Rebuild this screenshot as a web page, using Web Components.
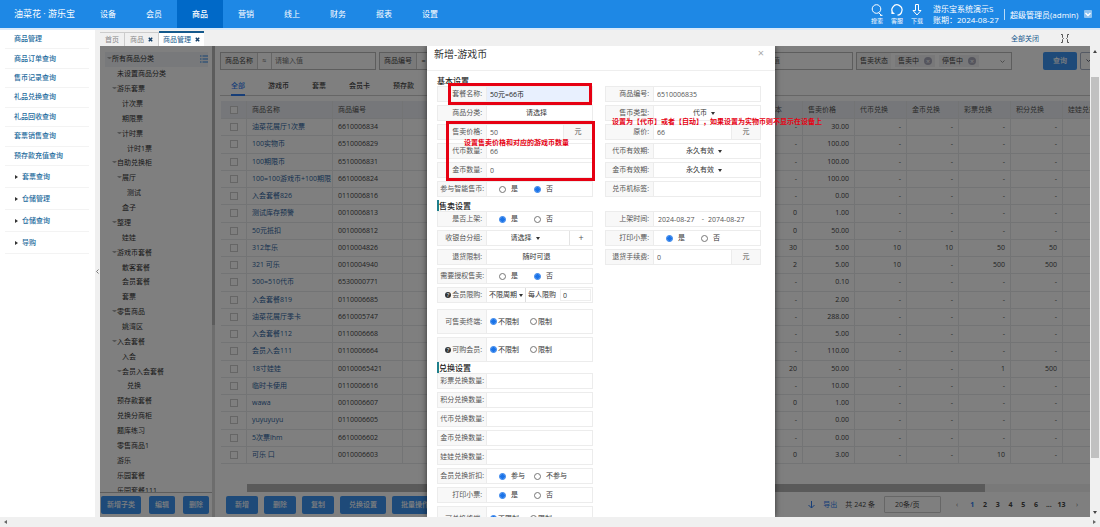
<!DOCTYPE html>
<html lang="zh-CN">
<head>
<meta charset="utf-8">
<title>商品管理</title>
<style>
html,body{margin:0;height:100%}
body{font:7px/10px "Open Sans","Noto Sans CJK SC",sans-serif;color:#444;background:#fff;overflow:hidden}
</style>
</head>
<body>
<app-shell></app-shell>
<script>
const base = `*{box-sizing:border-box}button,input,select{font:inherit;color:inherit;margin:0;padding:0;border:0;background:none;border-radius:0;outline:0;min-width:0}
button{cursor:pointer;white-space:nowrap}a{color:inherit;text-decoration:none}ul{list-style:none;margin:0;padding:0}select{appearance:none}`;
function define(tag, css, html) {
  customElements.define(tag, class extends HTMLElement {
    constructor() {
      super();
      this.attachShadow({mode: 'open'});
    }
    connectedCallback() {
      const body = typeof html === 'function' ? html(this) : html;
      this.shadowRoot.innerHTML = `<style>${base}${css}</style>${body}`;
    }
  });
}

/* Top bar */
define('top-bar', `
:host{display:flex;height:30px;background:#1e88e5;color:#fff;border-bottom:2px solid #d9eafa;font-size:8px;align-items:stretch}
.brand{width:85px;padding-left:14px;font-size:9px;line-height:28px;white-space:nowrap}
nav{display:flex;flex:1}
nav a{width:46px;text-align:center;line-height:28px}
nav a.on{background:#0069c8;font-weight:500}
.tools{display:flex;align-items:center}
.tool{width:20px;display:flex;flex-direction:column;align-items:center;font-size:6px;line-height:8px;gap:1px;white-space:nowrap}
.tool svg{width:12px;height:12px}
.info{margin-left:1px;line-height:11px;width:71px;white-space:nowrap}
.user{border-left:1px solid #b9dbf7;padding-left:5px;line-height:11px;width:80px;white-space:nowrap}
.more{width:8px;height:8px;background:#8fc3f1;border-radius:1px;display:flex;margin-right:8px}
.more svg{width:8px;height:8px}
.tools .info{margin-left:6px}
`, `<div class="brand">油菜花 · 游乐宝</div>
<nav>${['设备','会员','商品','营销','线上','财务','报表','设置'].map(t => `<a href="#" class="${t === '商品' ? 'on' : ''}">${t}</a>`).join('')}</nav>
<div class="tools">
<a href="#" class="tool"><svg viewBox="0 0 12 12" fill="none" stroke="#fff"><circle cx="5.5" cy="5" r="4.3"/><path d="M7.5 8.5l3 3M9 11.3h2.5"/></svg>搜索</a>
<a href="#" class="tool"><svg viewBox="0 0 12 12" fill="none" stroke="#fff" stroke-width="1.2"><path d="M2.500 9.500A5 5 0 1 1 10.500 8M1 6v3.500h2.500M10.800 7.500c-.5 2-2 3.500-4.300 3.700"/></svg>客服</a>
<a href="#" class="tool"><svg viewBox="0 0 12 12" fill="none" stroke="#fff"><path d="M4.500 .5h3v6h2.500L6 11 2 6.500h2.500z"/></svg>下载</a>
<div class="info">游乐宝系统演示S<br>账期：2024-08-27</div>
<div class="user">超级管理员(admin)</div>
<button class="more" aria-label="更多"><svg viewBox="0 0 8 8" fill="none" stroke="#fff" stroke-width="1.400"><path d="M1.500 3L4 5.500 6.500 3"/></svg></button>
</div>`);

/* Left menu */
define('side-nav', `
:host{display:block;padding:0 6px 0 5px;background:#fff;color:#1b6a9c;font-weight:500}
.flat{display:grid;grid-auto-rows:1fr;height:136px}
li{display:flex;align-items:center;padding-left:9px;border-bottom:1px solid #f3f3f3;white-space:nowrap}
.deep li{height:22px;gap:4px;padding-left:10px}
.deep li::before{content:"";border:2px solid transparent;border-left:3px solid #333;border-right:0}
`, `<ul class="flat">${['商品管理','商品订单查询','售币记录查询','礼品兑换查询','礼品回收查询','套票销售查询','预存款充值查询'].map(t => `<li><a href="#">${t}</a></li>`).join('')}</ul>
<ul class="deep">${['套票查询','仓储管理','仓储查询','导购'].map(t => `<li><a href="#">${t}</a></li>`).join('')}</ul>`);

/* Page tabs */
define('page-tabs', `
:host{display:flex;height:16px;background:#f0f0f0;padding-left:5px;align-items:flex-end;color:#888}
.tab{height:14px;display:flex;align-items:center;justify-content:center;gap:4px;border:1px solid #ccc;border-bottom:0;border-left:0;padding:0 5px}
.tab:first-child{border-left:1px solid #ccc}
.tab.on{height:15px;background:#fff;color:#14598c;border:0;border-top:2px solid #14598c;padding:0 4px}
.tab button{width:5px;height:8px;display:flex;align-items:center}
.tab svg{width:5px;height:5px}
.all{margin-left:auto;color:#14598c;line-height:15px}
.fold{width:8px;height:9px;margin:0 31px 3px 22px;display:flex}
`, () => { const x = `<button aria-label="关闭"><svg viewBox="0 0 5 5" stroke="#14406a" stroke-width="1.500"><path d="M.8.8l3.400 3.400M4.200.8L.8 4.200"/></svg></button>`;
return `<div class="tab"><a href="#">首页</a></div><div class="tab"><a href="#">商品</a>${x}</div><div class="tab on"><a href="#">商品管理</a>${x}</div>
<a href="#" class="all">全部关闭</a><button class="fold" aria-label="收起"><svg viewBox="0 0 8 9" width="8" height="9" fill="none" stroke="#555"><path d="M0 .5h1.500v3l1 1-1 1v3H0M8 .5H6.500v3l-1 1 1 1v3h1.500"/></svg></button>`; });

/* Category tree */
const tree = [[0,'所有商品分类',1],[1,'未设置商品分类'],[1,'游乐套票',1],[2,'计次票'],[2,'期限票'],[2,'计时票',1],[3,'计时1票'],[1,'自助兑换柜',1],[2,'展厅',1],[3,'测试'],[2,'盒子'],[1,'整理',1],[2,'娃娃'],[1,'游戏币套餐',1],[2,'散客套餐'],[2,'会员套餐'],[2,'套票'],[1,'零售商品',1],[2,'姚湾区'],[1,'入会套餐',1],[2,'入会'],[2,'会员入会套餐',1],[3,'兑换'],[1,'预存款套餐'],[1,'兑换分商柜'],[1,'题库练习'],[1,'零售商品1'],[1,'游乐'],[1,'乐园套餐'],[1,'乐园套餐111']];
define('category-tree', `
:host{display:flex;flex-direction:column;width:115px;background:#fff;border-right:3px solid #dadada;min-height:0;position:relative;color:#333}
.view{flex:1;overflow:hidden;min-height:0;padding:6px 4px 0 5px}
ul{height:446px;display:grid;grid-auto-rows:1fr}
li{display:flex;align-items:center;white-space:nowrap}
li.l0{background:#f0f3f6;padding-left:2px}.l1{padding-left:7px}.l2{padding-left:12px}.l3{padding-left:17px}
i{width:5px;height:4px;display:flex}
i.c::before{content:"";width:3px;border:2px solid transparent;border-top-color:#aaa;height:0}
li svg{margin-left:auto;width:8px;height:8px}
.bar{height:25px;border-top:1px solid #bbb;display:flex;align-items:center;gap:8px;padding-left:1px}
.bar button{height:18px;background:#3c94f2;color:#fff;border-radius:2px;padding:0 6px;font-weight:500}
.thumb{position:absolute;right:-3px;top:0;width:3px;height:279px;background:#b8b8b8}
`, `<div class="view"><ul>${tree.map(([l,t,c]) => `<li class="l${l}"><i class="${c ? 'c' : ''}"></i>${t}${l ? '' : '<svg viewBox="0 0 8 8" stroke="#2f86e8"><path d="M0 1h1.500M2.500 1H8M0 4h1.500M2.500 4H8M0 7h1.500M2.500 7H8"/></svg>'}</li>`).join('')}</ul></div>
<div class="bar"><button>新增子类</button><button>编辑</button><button>删除</button></div><div class="thumb"></div>`);

/* Filter field: caption, operator and text box */
define('filter-field', `
:host{display:flex;height:18px;width:156px;border:1px solid #bbb;flex:none}
label{width:37px;text-align:center;line-height:16px;background:#f4f4f4;border-right:1px solid #ccc;white-space:nowrap}
.op{width:14px;text-align:center;line-height:16px;border-right:1px solid #ccc}
input{flex:1;padding-left:3px}
input::placeholder{color:#777;opacity:1}
`, el => `<label for="q">${el.getAttribute('label') || ''}</label><span class="op">${el.getAttribute('op') || ''}</span><input id="q" aria-label="${el.getAttribute('label') || '条件'}" placeholder="请输入值">`);

/* Product table */
const rows = `油菜花展厅1次票|6610006834|-|30.00
100实物币|6510006829|-|100.00
100期限币|6510006831|-|100.00
100=100游戏币+100期限|6610006824|-|100.00
入会套餐826|0110006816|-|0.00
测试库存预警|0010006813|0|1.00
50元抵扣|0010006812|0|50.00
312年乐|0010004826|30|5.00|10|10|50|50
321 可乐|0010004940|2|5.00|10|-|500|500
500=510代币|6530000771|-|0.10
入会套餐819|0110006685|-|2.00
油菜花展厅季卡|6610005747|-|288.00
入会套餐112|0110006668|-|5.00
会员入会111|0110006664|-|110.00
18寸娃娃|00100065421|20|50.00|-|-|1|500
临时卡使用|0110006616|-|10.00
wawa|0010006607|0|1.00
yuyuyuyu|0110006605|-|0.00
5次票lhm|6610006602|-|0.00
可乐 口|0010006603|0|3.00|-|-|10|-`.split('\n').map(r => r.split('|'));
define('product-table', `
:host{display:block;flex:1;min-height:0;overflow:hidden}
table{table-layout:fixed;width:calc(100% + 25px);height:363px;border-collapse:separate;border-spacing:0}
th,td{padding:0 5px;border-right:1px solid #e6e8ea;border-bottom:1px solid #e6e8ea;text-align:right;white-space:nowrap;overflow:hidden}
th{background:#eceff4;text-align:left;font-weight:400;height:18px;color:#555}
.ck{width:26px;text-align:center;padding:0}.nm{width:86px;text-align:left;padding-right:0}.cd{width:70px;text-align:left}.n{width:52px}
td.nm{color:#2b5f9e}
input{appearance:none;width:8px;height:8px;border:1px solid #ccc;background:#fff;display:block;margin:auto}
`, `<table><thead><tr><th class="ck"><input type="checkbox" aria-label="全选"></th><th class="nm">商品名称</th><th class="cd">商品编号</th><th></th>${['成本','售卖价格','代币兑换','金币兑换','彩票兑换','积分兑换','娃娃兑换'].map((t, i) => `<th class="n"${i ? '' : ' style="text-align:right;padding-right:20px"'}>${t}</th>`).join('')}</tr></thead>
<tbody>${rows.map(r => `<tr><td class="ck"><input type="checkbox" aria-label="${r[0]}"></td><td class="nm">${r[0]}</td><td class="cd">${r[1]}</td><td></td>${[2,3,4,5,6,7].map(i => `<td class="n">${r[i] || '-'}</td>`).join('')}<td class="n"></td></tr>`).join('')}</tbody></table>`);

/* Product list panel */
define('product-panel', `
:host{display:flex;flex-direction:column;flex:1;min-width:0;background:#fff;overflow:hidden;color:#444}
.filters{display:flex;gap:3px;padding:6px 0 0 5px;height:24px}
.status{width:156px;height:18px;border:1px solid #bbb;display:flex;align-items:center;flex:none;white-space:nowrap}
.status b{font-weight:400;width:34px;text-align:center;line-height:16px;background:#f4f4f4}
.tag{display:flex;align-items:center;gap:5px;background:#f0f1f3;height:12px;padding:0 3px;margin-left:4px;line-height:12px}
.tag button{width:8px;height:8px;border-radius:4px;background:#aab;color:#fff;line-height:7px}
.caret{width:5px;height:5px;margin:0 6px 0 auto}
.go{width:34px;height:18px;background:#3c94f2;color:#fff;border-radius:2px;flex:none;margin-left:28px;font-weight:500}
.fold{width:20px;height:18px;border:1px solid #aab4c8;border-radius:2px;text-align:left;padding-left:5px;flex:none}
.kinds{display:flex;gap:23px;padding-left:11px;height:20px;margin:6px 0 5px 5px;border-bottom:1px solid #ccc;font-weight:500}
.kinds a{line-height:20px;height:20px}
.kinds .on{color:#2f7df0;border-bottom:2px solid #2f7df0}
product-table{margin-left:6px}
.scroll{height:8px;margin-left:32px;background:#f2f2f2}
.scroll div{width:87.600%;height:100%;background:#b4b4b4}
.foot{height:25px;display:flex;align-items:center;padding:0 4px 0 11px;gap:6px;white-space:nowrap}
.foot .b{height:18px;width:32px;background:#3c94f2;color:#fff;border-radius:2px;font-weight:500;flex:none}
.foot .w{width:46px}
.dl{margin:0 2px 0 auto;color:#2f7df0;display:flex;gap:8px;align-items:center}
.size{width:57px;height:17px;border:1px solid #ccc;border-radius:1px;padding-left:10px;margin:0 1px 0 3px}
.pages{display:grid;grid-template-columns:18px repeat(8,1fr) 18px;width:138px;font-weight:700}
.pages a{text-align:center}.pages .on{color:#2f7df0}.pages .thin{font-weight:400;color:#777}
`, `<div class="filters"><filter-field label="商品名称" op="≈"></filter-field><filter-field label="商品编号" op="="></filter-field><filter-field></filter-field><filter-field></filter-field>
<div class="status"><b>售卖状态</b><span class="tag">售卖中<button aria-label="移除售卖中">×</button></span><span class="tag">停售中<button aria-label="移除停售中">×</button></span><svg class="caret" viewBox="0 0 5 5" fill="none" stroke="#999"><path d="M.5 1.500l2 2 2-2"/></svg></div>
<button class="go">查询</button><button class="fold" aria-label="展开"><svg width="5" height="5" viewBox="0 0 5 5" fill="none" stroke="#667"><path d="M.5 1.500l2 2 2-2"/></svg></button></div>
<div class="kinds"><a href="#" class="on">全部</a><a href="#">游戏币</a><a href="#">套票</a><a href="#">会员卡</a><a href="#">预存款</a></div>
<product-table></product-table>
<div class="scroll"><div></div></div>
<div class="foot"><button class="b">新增</button><button class="b">删除</button><button class="b">复制</button><button class="b w">兑换设置</button><button class="b w">批量操作</button>
<a href="#" class="dl"><svg width="7" height="8" viewBox="0 0 7 8" fill="none" stroke="#2f7df0"><path d="M3.500 0v7M.5 4l3 3 3-3"/></svg>导出</a><span>共 242 条</span>
<select class="size" aria-label="每页条数"><option>20条/页</option></select>
<div class="pages"><a href="#" class="thin">‹</a><a href="#" class="on">1</a><a href="#">2</a><a href="#">3</a><a href="#">4</a><a href="#">5</a><a href="#">6</a><a href="#">...</a><a href="#">13</a><a href="#" class="thin">›</a></div></div>`);

/* One row of the form */
let uid = 0;
define('form-row', `
:host{display:flex;height:16px;border:1px solid #ececec;color:#555;white-space:nowrap}
:host([tall]){height:25px}
.cap{width:49px;flex:none;background:#f8f8f8;text-align:right;padding-right:4px;display:flex;align-items:center;justify-content:flex-end;border-right:1px solid #ececec}
:host([long]) .cap{padding-right:2px}
:host([side]) .cap{width:48px}
.val{flex:1;display:flex;align-items:center;min-width:0}
.val>input[type=text]{flex:1;width:0;height:100%;padding-left:3px}
:host([hot]) .val{background:#e8f0fe;color:#222}
.unit{width:29px;align-self:stretch;background:#f8f8f8;border-left:1px solid #ececec;display:flex;align-items:center;justify-content:center}
.mid{flex:1;height:100%;display:flex;align-items:center;justify-content:center;gap:4px;color:#333;padding-right:6px}
.caret{border:2px solid transparent;border-top:3px solid #333;border-bottom:0;width:0}
.radios label{display:flex;align-items:center;gap:5px;width:35px}
.radios{padding-left:12px;color:#333}
:host([tight]) .radios{padding-left:3px}
:host([tight]) .radios label{width:40px;gap:1px}
input[type=radio]{appearance:none;width:7px;height:7px;border:1px solid #767676;border-radius:50%;background:#fff;flex:none}
input[type=radio]:checked{border-color:#1a73e8;background:radial-gradient(circle,#1a73e8 2px,#fff 3px)}
.add{width:23px;height:100%;border-left:1px solid #e4e4e4;font-size:9px}
.range{padding-left:4px}
.range>input[type=text]{flex:none;width:40px;padding:0}.range span{width:10px;text-align:center}
.q{background:#333;color:#fff;width:6px;height:6px;border-radius:3px;font-size:6px;line-height:6px;text-align:center;margin-right:1px}
.limit{padding-left:2px;gap:2px;color:#333}
.limit label{border:1px solid #ddd;border-width:0 0 0 1px;height:100%;display:flex;align-items:center;padding-left:2px;gap:4px;flex:1}
.limit label input{width:31px;height:12px;border:1px solid #eee;padding-left:2px}
`, el => {
  const id = 'f' + (++uid), a = n => el.getAttribute(n) || '', k = a('kind'), v = a('value');
  const q = el.hasAttribute('help') ? '<span class="q" aria-hidden="true">?</span>' : '';
  const grouped = k === 'radio' || k === 'range';
  const cap = grouped ? `<span class="cap" id="${id}">${q}${a('label')}:</span>` : `<label class="cap" for="${id}">${q}${a('label')}:</label>`;
  let body;
  if (k === 'radio') body = `<div class="val radios" role="radiogroup" aria-labelledby="${id}">${v.split(',').map((t, i) => `<label><input type="radio" name="${id}"${i == (a('pick') || 0) ? ' checked' : ''}>${t}</label>`).join('')}</div>`;
  else if (k === 'select') body = `<div class="val"><div class="mid"><select id="${id}"><option>${v}</option></select><i class="caret"></i></div>${el.hasAttribute('add') ? '<button class="add" aria-label="添加">+</button>' : ''}</div>`;
  else if (k === 'button') body = `<div class="val"><button class="mid" id="${id}">${v}</button></div>`;
  else if (k === 'range') body = `<div class="val range" role="group" aria-labelledby="${id}"><input type="text" aria-label="开始" value="2024-08-27"><span>-</span><input type="text" aria-label="结束" value="2074-08-27"></div>`;
  else if (k === 'limit') body = `<div class="val limit"><select id="${id}"><option>不限周期</option></select><i class="caret"></i><label>每人限购<input type="text" value="0"></label></div>`;
  else body = `<div class="val"><input type="text" id="${id}" value="${v}">${a('unit') ? `<span class="unit">${a('unit')}</span>` : ''}</div>`;
  return cap + body;
});

/* Section of the form: two columns of rows */
define('form-section', `
:host{display:block}
h3{margin:0;font-size:8px;line-height:11px;font-weight:500;color:#222;border-left:2px solid #1f7f8c;padding-left:0}
:host([plain]) h3{border:0}
.cols{display:grid;grid-template-columns:1fr 1fr;gap:12px;align-items:start}
.col{display:grid;gap:3px}
`, el => `<h3>${el.getAttribute('heading')}</h3><div class="cols"><div class="col"><slot></slot></div><div class="col"><slot name="right"></slot></div></div>`);

/* Dialog */
define('goods-dialog', `
:host{display:flex;flex-direction:column;width:348px;background:#fff;box-shadow:0 0 6px rgba(0,0,0,.6);overflow:hidden}
header{height:25px;flex:none;display:flex;justify-content:space-between;border-bottom:1px solid #eee;padding:0 11px 0 7px}
h2{margin:0;font-size:10px;line-height:16px;font-weight:400;color:#333}
header button{font-size:11px;height:14px;color:#aaa;line-height:14px}
.body{flex:1;min-height:0;overflow:hidden;padding:4px 14px 0 10px}
form-section{margin-bottom:3px}
.first{margin-top:3px}
form-section:nth-child(2){margin-bottom:0}
`, `<header><h2>新增-游戏币</h2><button aria-label="关闭">×</button></header>
<div class="body">
<form-section plain heading="基本设置">
<form-row hot label="套餐名称" value="50元=66币"></form-row>
<form-row kind="button" label="商品分类" value="请选择"></form-row>
<form-row label="售卖价格" value="50" unit="元"></form-row>
<form-row label="代币数量" value="66"></form-row>
<form-row label="金币数量" value="0"></form-row>
<form-row long kind="radio" label="参与智能售币" value="是,否" pick="1"></form-row>
<form-row slot="right" side label="商品编号" value="6510006835"></form-row>
<form-row slot="right" side kind="select" label="售币类型" value="代币"></form-row>
<form-row slot="right" side label="原价" value="66" unit="元"></form-row>
<form-row slot="right" side kind="select" label="代币有效期" value="永久有效"></form-row>
<form-row slot="right" side kind="select" label="金币有效期" value="永久有效"></form-row>
<form-row slot="right" side label="兑币机标签"></form-row>
</form-section>
<form-section heading="售卖设置">
<form-row kind="radio" label="是否上架" value="是,否"></form-row>
<form-row kind="select" add label="收银台分组" value="请选择"></form-row>
<form-row kind="button" label="退货限制" value="随时可退"></form-row>
<form-row long kind="radio" label="需要授权售卖" value="是,否" pick="1"></form-row>
<form-row help kind="limit" label="会员限购"></form-row>
<form-row class="first" tall tight kind="radio" label="可售卖终端" value="不限制,限制"></form-row>
<form-row help tall tight kind="radio" label="可购会员" value="不限制,限制"></form-row>
<form-row slot="right" side kind="range" label="上架时间"></form-row>
<form-row slot="right" side kind="radio" label="打印小票" value="是,否"></form-row>
<form-row slot="right" side label="退货手续费" value="0" unit="元"></form-row>
</form-section>
<form-section heading="兑换设置">
<form-row long label="彩票兑换数量"></form-row>
<form-row long label="积分兑换数量"></form-row>
<form-row long label="代币兑换数量"></form-row>
<form-row long label="金币兑换数量"></form-row>
<form-row long label="娃娃兑换数量"></form-row>
<form-row long kind="radio" label="会员兑换折扣" value="参与,不参与"></form-row>
<form-row kind="radio" label="打印小票" value="是,否"></form-row>
<form-row tall tight kind="radio" label="可兑换终端" value="不限制,限制"></form-row>
</form-section>
</div>`);

/* Frame of the application */
define('app-shell', `
:host{display:grid;grid-template:30px 16px 1fr 10px / 95px 5px 1fr 10px;height:100vh}
top-bar{grid-column:1/-1}
side-nav{grid-row:2/4}
page-tabs{grid-column:2/-1}
.handle{grid-row:3;grid-column:2;background:#f0f0f0;display:flex;align-items:center;justify-content:center;padding-bottom:20px}
main{grid-row:3;grid-column:3;position:relative;min-height:0;min-width:0;display:flex;overflow:hidden}
.shade{position:absolute;inset:0;background:rgba(0,0,0,.5);display:flex;justify-content:center;padding-left:12px}
.mark{position:absolute;border:3px solid #e60012}
.m1{left:348px;top:37px;width:144px;height:22px}
.m2{left:346px;top:75px;width:149px;height:60px}
.note{position:absolute;margin:0;color:#e60012;font-weight:700;white-space:nowrap;text-spacing-trim:space-all}
.n1{left:512px;top:71px}
.n2{left:364px;top:92px}
.vbar{grid-row:3;grid-column:4;background:#f0f0f0;display:flex;flex-direction:column;align-items:center;justify-content:space-between;padding:4px 0 3px}
.vbar div{width:8px;flex:1;background:#c1c1c1;margin:24px 0 53px}
.hbar{grid-column:1/-1;background:#f0f0f0;display:flex;justify-content:space-between;align-items:center;padding:0 4px}
svg{display:block}
`, `<top-bar></top-bar><side-nav></side-nav><page-tabs></page-tabs>
<div class="handle"><svg width="3" height="5" viewBox="0 0 3 5" fill="none" stroke="#777"><path d="M2.500.5l-2 2 2 2"/></svg></div>
<main><category-tree></category-tree><product-panel></product-panel>
<div class="shade"><goods-dialog role="dialog" aria-label="新增-游戏币"></goods-dialog></div>
<div class="mark m1"></div><div class="mark m2"></div>
<p class="note n1">设置为【代币】或者【自动】，如果设置为实物币则不显示在设备上</p>
<p class="note n2">设置售卖价格和对应的游戏币数量</p></main>
<div class="vbar"><svg width="4" height="3"><path d="M0 3l2-3 2 3z" fill="#444"/></svg><div></div><svg width="4" height="3"><path d="M0 0l2 3 2-3z" fill="#444"/></svg></div>
<div class="hbar"><svg width="3" height="4"><path d="M3 0L0 2l3 2z" fill="#666"/></svg><svg width="3" height="4"><path d="M0 0l3 2-3 2z" fill="#666"/></svg></div>`);
</script>
</body>
</html>
